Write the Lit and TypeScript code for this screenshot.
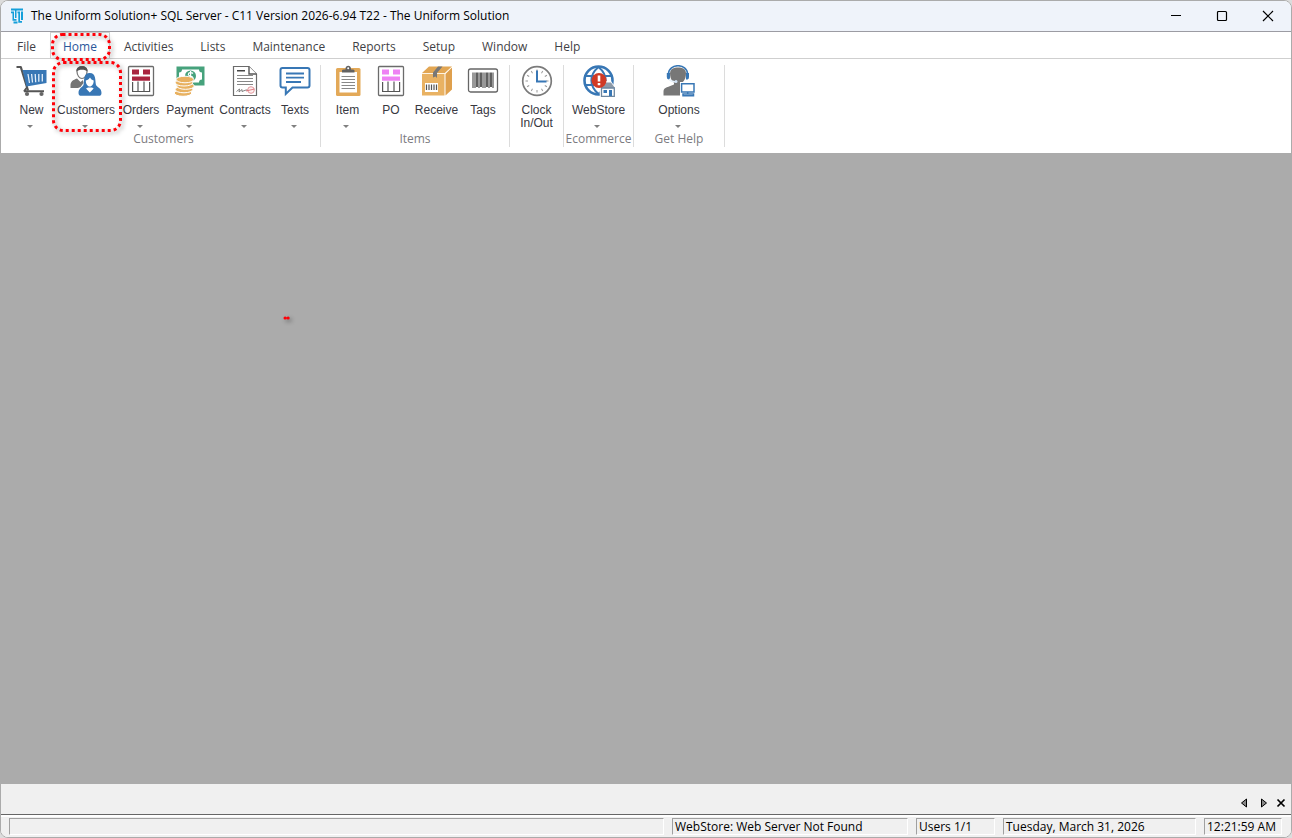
import { LitElement, html, svg, css, nothing, TemplateResult } from "lit";
import { customElement, property, state } from "lit/decorators.js";
import { classMap } from "lit/directives/class-map.js";

const lines = (xs: number[], y1: number, y2: number) =>
  xs.map((x) => svg`<path d="M${x} ${y1}V${y2}"/>`);

const grid = (accent: string) => svg`
  <rect x="3.5" y="1.500" width="25" height="29" rx="1" fill="#fff" stroke="#6b6b6b" stroke-width="1.3"/>
  <path fill="${accent}" d="M7 4.5h7v5H7zM18 4.5h7v5h-7zM7 11.5h18v4.2H7z"/>
  <path fill="none" stroke="#555" stroke-width="1.2" d="M7.6 17V26.5H24.6V17M13 16.5V26.5M19 16.5V26.5"/>`;

const icons: Record<string, TemplateResult> = {
  cart: svg`
    <path d="M0.500 2H4.800L12 25.500" fill="none" stroke="#555" stroke-width="2.2" stroke-linejoin="round"/>
    <path d="M6.500 5H30.500V18L10.500 21.500Z" fill="#3877b5"/>
    <path d="M12 9L13.500 18M15.600 9L16.500 17.500M19.200 9L19.700 17.200M22.800 9V16.800M26.300 9V16.500" stroke="#e4effa" stroke-width="1.300"/>
    <path d="M8 26.500L10.500 23M8 26.300H28" fill="none" stroke="#555" stroke-width="2"/>
    <circle cx="11" cy="29" r="2.100" fill="#666"/><circle cx="25.500" cy="29" r="2.100" fill="#666"/>`,
  customers: svg`
    <path d="M0.500 20.500C0.500 16.500 3 15 7 13.500L10.500 17L13 15L13.500 18L10.500 22L8 23H0.500Z" fill="#757575"/>
    <path d="M7 6.500C7 3 9 1.500 12 1.500S17 3 17 6.500C17 10.500 14.500 13.500 12 13.500S7 10.500 7 6.500Z" fill="#fff" stroke="#777" stroke-width="1.200"/>
    <path d="M6.500 6.500C5.500 -0.500 18.500 -0.500 17.500 6.500C15 4 9 4 6.500 6.500Z" fill="#555"/>
    <path d="M13.500 20C14.500 16 13 8 19.700 8S25 16 26 20C27 22.500 31.500 22.500 31.500 28C31.500 30 30.500 30.800 28.500 30.800H11.500C9.500 30.800 8.500 30 8.500 28C8.500 23 12.500 22.500 13.500 20Z" fill="#3877b5"/>
    <path d="M15.800 15.500C18 15 19.500 13.500 20 12.500C20.800 14 22 15.200 23.700 15.500C23.700 19 22 21.500 19.800 21.500S15.800 19 15.800 15.500ZM16 23.500L19.800 27.500L23.700 23.500L22 22.500H18Z" fill="#fff"/>`,
  orders: grid("#a9243f"),
  po: grid("#ee82f4"),
  payment: svg`
    <path d="M2.500 1.500H30.500V20.500H2.500Z" fill="#46a27c"/>
    <path d="M8 4.500H25C25 6.500 26 7.500 28 7.500V14.500C26 14.500 25 15.500 25 17.500H8C8 15.500 7 14.500 5 14.500V7.500C7 7.500 8 6.500 8 4.500Z" fill="#fff"/>
    <circle cx="16.500" cy="11" r="5.500" fill="#46a27c"/>
    <path d="M19 8.500C17.500 7 14.300 7.600 14.300 9.400C14.300 11.500 19 10.500 19 12.700C19 14.700 15.500 15 14 13.300M16.600 6V16" fill="none" stroke="#fff" stroke-width="1.200"/>
    <g fill="#e8b160" stroke="#fff" stroke-width="1">
      <ellipse cx="9" cy="28" rx="8.800" ry="3.300"/><ellipse cx="10" cy="24.500" rx="8.800" ry="3.300"/>
      <ellipse cx="11.500" cy="21" rx="8.800" ry="3.300"/><ellipse cx="10" cy="17.700" rx="8.800" ry="3.300"/>
      <ellipse cx="11" cy="14.500" rx="8.800" ry="3.300"/></g>`,
  contract: svg`
    <path d="M4.500 1.500H20L27.500 9V30.500H4.500Z" fill="#fff" stroke="#6b6b6b" stroke-width="1.200"/>
    <path d="M20 1.500V9H27.500" fill="#fff" stroke="#555" stroke-width="1.400"/>
    <path d="M8 5.700H16" stroke="#444" stroke-width="1.400"/>
    <path d="M8 10.500H24M8 13.500H24M8 16.500H24M8 19.500H24" stroke="#888" stroke-width="1"/>
    <path d="M7.500 26.500L10.500 24L10 27L13 24.500L13 26.500L17 25H23" fill="none" stroke="#666" stroke-width="0.800"/>
    <circle cx="22" cy="25" r="3.300" fill="#fdeeee" stroke="#e49a9f" stroke-width="1"/><path d="M17 26L25.500 24" stroke="#d9626b" stroke-width="0.800"/>`,
  texts: svg`
    <path d="M3.500 3H28.500Q30.500 3 30.500 5V20.500Q30.500 22.500 28.500 22.500H13.500L6.800 29V22.500H3.500Q1.500 22.500 1.500 20.500V5Q1.500 3 3.500 3Z" fill="#fff" stroke="#3877b5" stroke-width="2"/>
    <path d="M7 8.500H25M7 12.700H25M7 17H22" stroke="#3877b5" stroke-width="1.800"/>`,
  item: svg`
    <rect x="4" y="3" width="24.500" height="28" rx="1.500" fill="#e3a958"/>
    <rect x="7.500" y="7" width="17.500" height="20.500" fill="#fff"/>
    <path d="M9.500 11.500H23M9.500 14.500H23M9.500 17.500H23M9.500 20.500H23M9.500 23.500H23" stroke="#888" stroke-width="1"/>
    <path d="M10 7.500V5.500Q10 4.500 12 4.500H13.500C13 -0.500 19.500 -0.500 19 4.500H20.500Q22.500 4.500 22.500 5.500V7.500Z" fill="#626262"/><circle cx="16.200" cy="3.300" r="1" fill="#fff"/>`,
  box: svg`
    <path d="M1 9H23.500V30.500H1Z" fill="#e9b263"/><path d="M1 8L8 1.500H31L24 8Z" fill="#e2a653"/>
    <path d="M24.500 9L31 2.500V24.500L24.500 30.500Z" fill="#dfa04d"/>
    <path d="M1 8.500H24L31 2" fill="none" stroke="#fff2dc" stroke-width="0.900"/>
    <path d="M17 1.500H21.500L16 8V13L14.500 11.500L12 12.500V7.500Z" fill="#777"/>
    <rect x="4" y="18" width="13" height="9" fill="#fff"/>
    <g stroke="#555" stroke-width="1.200">${lines([5.5, 8, 10.5, 13, 15.5], 19.5, 25)}</g>`,
  tags: svg`
    <rect x="1.500" y="4" width="29" height="23" rx="2" fill="#fff" stroke="#666" stroke-width="1.300"/>
    <g stroke="#444" stroke-width="1.100">${lines([6, 8, 12, 16, 18, 22, 26], 7.5, 23)}</g>
    <g stroke="#444" stroke-width="1.700">${lines([10, 14, 20, 24], 7.5, 22)}</g>`,
  clock: svg`
    <circle cx="16" cy="16" r="14.300" fill="#fff" stroke="#7b7b7b" stroke-width="1.700"/>
    <g stroke="#999" stroke-width="1">${[0, 30, 60, 90, 120, 150, 180, 210, 240, 270, 300, 330].map(
      (a) => svg`<path d="M16 4.500V7" transform="rotate(${a} 16 16)"/>`)}</g>
    <path d="M16 5.500V16.500H25.500" fill="none" stroke="#3877b5" stroke-width="2"/>`,
  web: svg`
    <circle cx="15.500" cy="15.500" r="14" fill="#fff" stroke="#3877b5" stroke-width="2.600"/>
    <path d="M2 11H29M2 20H29M15.500 2C6 10 6 21 15.500 29M15.500 2C25 10 25 21 15.500 29" fill="none" stroke="#3877b5" stroke-width="2"/>
    <path d="M16 22L21 16H28L32 22V32H17Z" fill="#fff"/>
    <path d="M17.500 23L21.500 17.500H28L32 23Z" fill="#8d9aa8"/><path d="M18.500 23H31.300V31.300H18.500Z" fill="#fff" stroke="#6e87a0" stroke-width="1.300"/>
    <path d="M20.500 25H24V28H20.500Z" fill="#3877b5"/><path d="M26 25H29V31H26Z" fill="#3877b5"/>
    <circle cx="16" cy="15.500" r="7.500" fill="#d13a25"/>
    <path d="M16 10.500V16.500M16 18V20.300" stroke="#fff" stroke-width="2.600"/>`,
  support: svg`
    <path d="M0.500 30.500V26.500C0.500 22 6 22 11 19.500V16H19V19.500L22 21V30.500Z" fill="#777"/>
    <path d="M7 8.500C7 4 10.500 2.500 15 2.500S23 4 23 8.500C23 15 19 19 15 19S7 15 7 8.500Z" fill="#777"/>
    <path d="M5.500 9C5.500 -2 24.500 -2 24.500 9" fill="none" stroke="#3877b5" stroke-width="1.600"/>
    <path d="M3.800 8H7V14.500H5.500Q3.800 14 3.800 12ZM26 8H23V14.500H24.500Q26 14 26 12Z" fill="#3877b5"/>
    <path d="M6 14Q8 17 12.500 16.700" fill="none" stroke="#e6f0fa" stroke-width="1.500"/><circle cx="13" cy="16.500" r="1.500" fill="#cfe1f4"/>
    <path d="M17 17H32V32H17Z" fill="#fff"/>
    <path d="M18.600 18.700H31V27H18.600ZM24.700 27V29M20 30.800H30.500V29H20Z" fill="#fff" stroke="#3877b5" stroke-width="1.500"/>`,
};

@customElement("ribbon-button")
class RibbonButton extends LitElement {
  @property() label = "";
  @property() icon = "";
  @property({ type: Boolean }) menu = false;

  static styles = css`
    :host { display: block; flex: none; }
    button {
      display: flex; flex-direction: column; align-items: center;
      width: 100%; height: 100%; padding: 0; border: 0; background: none;
      font: 12px/13px "Liberation Sans", Arial, sans-serif; color: #38383f;
    }
    button:hover { background: #e8f0fa; }
    svg { display: block; flex: none; width: 32px; height: 32px; margin-bottom: 7px; }
    .label { white-space: pre; text-align: center; }
    .arrow {
      margin: 8px 3px 0 0; border: 3px solid transparent;
      border-top-color: #808080; border-bottom: 0;
    }
  `;

  render() {
    return html`<button type="button">
      <svg viewBox="0 0 32 32" aria-hidden="true">${icons[this.icon]}</svg>
      <span class="label">${this.label}</span>
      ${this.menu ? html`<span class="arrow"></span>` : nothing}
    </button>`;
  }
}

type Command = { label: string; icon: string; width: number; menu?: boolean };
type Group = { title: string; width: number; commands: Command[] };

const groups: Group[] = [
  { title: "Customers", width: 320, commands: [
    { label: "New", icon: "cart", width: 43, menu: true },
    { label: "Customers", icon: "customers", width: 66, menu: true },
    { label: "Orders", icon: "orders", width: 44, menu: true },
    { label: "Payment", icon: "payment", width: 54, menu: true },
    { label: "Contracts", icon: "contract", width: 56, menu: true },
    { label: "Texts", icon: "texts", width: 44, menu: true },
  ] },
  { title: "Items", width: 189, commands: [
    { label: "Item", icon: "item", width: 45, menu: true },
    { label: "PO", icon: "po", width: 42 },
    { label: "Receive", icon: "box", width: 49 },
    { label: "Tags", icon: "tags", width: 44 },
  ] },
  { title: "", width: 54, commands: [{ label: "Clock\nIn/Out", icon: "clock", width: 48 }] },
  { title: "Ecommerce", width: 70, commands: [{ label: "WebStore", icon: "web", width: 60, menu: true }] },
  { title: "Get Help", width: 91, commands: [{ label: "Options", icon: "support", width: 60, menu: true }] },
];

const tabs = ["File", "Home", "Activities", "Lists", "Maintenance", "Reports", "Setup", "Window", "Help"];

@customElement("app-root")
class AppRoot extends LitElement {
  @state() private active = "Home";

  static styles = css`
    :host { display: block; background: #dcdcdc; color: #000; font: 12px/16px "Open Sans", "Segoe UI", sans-serif; }
    * { box-sizing: border-box; }
    button { font: inherit; color: inherit; background: none; border: 0; padding: 0; }
    .window {
      position: relative; display: flex; flex-direction: column; min-height: 100vh;
      border: 1px solid #ababab; border-radius: 8px; overflow: hidden; background: #fff;
    }
    .titlebar { display: flex; align-items: center; height: 31px; padding-left: 9px; background: #eff3fa; border-bottom: 1px solid #9c9ca3; }
    .logo { width: 14px; height: 16px; margin-right: 7px; }
    .title { flex: 1; margin: 0; font-size: 12px; font-weight: 400; white-space: nowrap; }
    .caption { display: grid; place-items: center; width: 46px; height: 30px; }
    .tabs { display: flex; height: 27px; padding-left: 3px; border-bottom: 1px solid #cfcfcf; color: #3f3f46; }
    .tab { padding: 2px 12px 0; margin-right: 1px; border: 1px solid transparent; border-bottom: 0; }
    .tab.active { color: #2b579a; border-color: #d0d0d0; }
    .ribbon { display: flex; height: 94px; padding: 6px 0; }
    .group { display: flex; flex-direction: column; align-items: center; border-right: 1px solid #dcdcdc; }
    .group:first-child { padding-left: 6px; }
    .commands { display: flex; height: 67px; }
    .group-title { padding-top: 1px; color: #7b7b80; line-height: 16px; }
    .workspace { flex: 1; background: #ababab; }
    .strip { display: flex; align-items: center; justify-content: flex-end; gap: 8px; height: 30px; padding: 7px 5px 0 0; background: #f0f0f0; }
    .strip button { display: flex; }
    .strip .previous { margin-right: 4px; }
    .status { display: flex; gap: 8px; height: 23px; padding: 3px 9px 3px 8px; background: #f0f0f0; border-top: 1px solid #666; box-shadow: inset 0 2px #fff; }
    .panel { height: 17px; padding-left: 2px; line-height: 15px; white-space: nowrap; border: 1px solid; border-color: #a0a0a0 #fff #fff #a0a0a0; }
    .message { flex: 1; }
    .marks { position: absolute; left: 0; top: 0; width: 300px; height: 330px; pointer-events: none; filter: drop-shadow(2px 2px 2px #0006); }
  `;

  render() {
    const status = [["WebStore: Web Server Not Found", 236], ["Users 1/1", 79], ["Tuesday, March 31, 2026", 193], ["12:21:59 AM", 78]];
    return html`<div class="window">
      <header class="titlebar">
        <svg class="logo" viewBox="0 0 14 16" aria-hidden="true">
          <path d="M1 0.500H13V2.500H6.500V10H5V2.500H1ZM1 3.500H4V11H6.500V12.800H2.500V5.300H1ZM7.500 3.500H10V13H12V14.800H8.300V5.300H7.500ZM11 3.500H13V12H11ZM3.500 13.500H7.500V15.500H3.500Z" fill="#149fda"/>
        </svg>
        <h1 class="title">The Uniform Solution+ SQL Server - C11 Version 2026-6.94 T22 - The Uniform Solution</h1>
        <button class="caption" aria-label="Minimize"><svg width="12" height="12" stroke="#000"><path d="M1 5.500H11"/></svg></button>
        <button class="caption" aria-label="Maximize"><svg width="12" height="12" fill="none" stroke="#000" stroke-width="1.200"><rect x="1.500" y="1.500" width="9" height="9" rx="1"/></svg></button>
        <button class="caption" aria-label="Close"><svg width="12" height="12" stroke="#000" stroke-width="1.200"><path d="M1 1L11 11M11 1L1 11"/></svg></button>
      </header>
      <nav class="tabs">
        ${tabs.map((t) => html`<button class=${classMap({ tab: true, active: t === this.active })} @click=${() => (this.active = t)}>${t}</button>`)}
      </nav>
      <section class="ribbon">
        ${groups.map((g) => html`<div class="group" style="width:${g.width}px">
          <div class="commands">
            ${g.commands.map((c) => html`<ribbon-button style="width:${c.width}px" .label=${c.label} .icon=${c.icon} .menu=${!!c.menu}></ribbon-button>`)}
          </div>
          <div class="group-title">${g.title}</div>
        </div>`)}
      </section>
      <main class="workspace"></main>
      <div class="strip">
        <button class="previous" aria-label="Previous"><svg width="8" height="10"><path d="M6.500 1V9L1.500 5Z" fill="#888" stroke="#000"/></svg></button>
        <button aria-label="Next"><svg width="8" height="10"><path d="M1.500 1V9L6.500 5Z" fill="#888" stroke="#000"/></svg></button>
        <button aria-label="Close tab"><svg width="10" height="10"><path d="M1.500 1.500L8.500 8.500M8.500 1.500L1.500 8.500" stroke="#000" stroke-width="1.700"/></svg></button>
      </div>
      <footer class="status">
        <div class="panel message"></div>
        ${status.map(([text, width]) => html`<div class="panel" style="width:${width}px">${text}</div>`)}
      </footer>
      <svg class="marks" viewBox="0 0 300 330" aria-hidden="true" fill="none" stroke="#ff0008" stroke-width="3" stroke-dasharray="3 3">
        <rect x="51.500" y="33.500" width="57" height="25" rx="10"/>
        <rect x="52.500" y="61.500" width="67" height="68" rx="10"/>
        <path d="M284 317H284.200M287 317H287.200" stroke-dasharray="none" stroke-linecap="round" stroke-width="3"/>
      </svg>
    </div>`;
  }
}
